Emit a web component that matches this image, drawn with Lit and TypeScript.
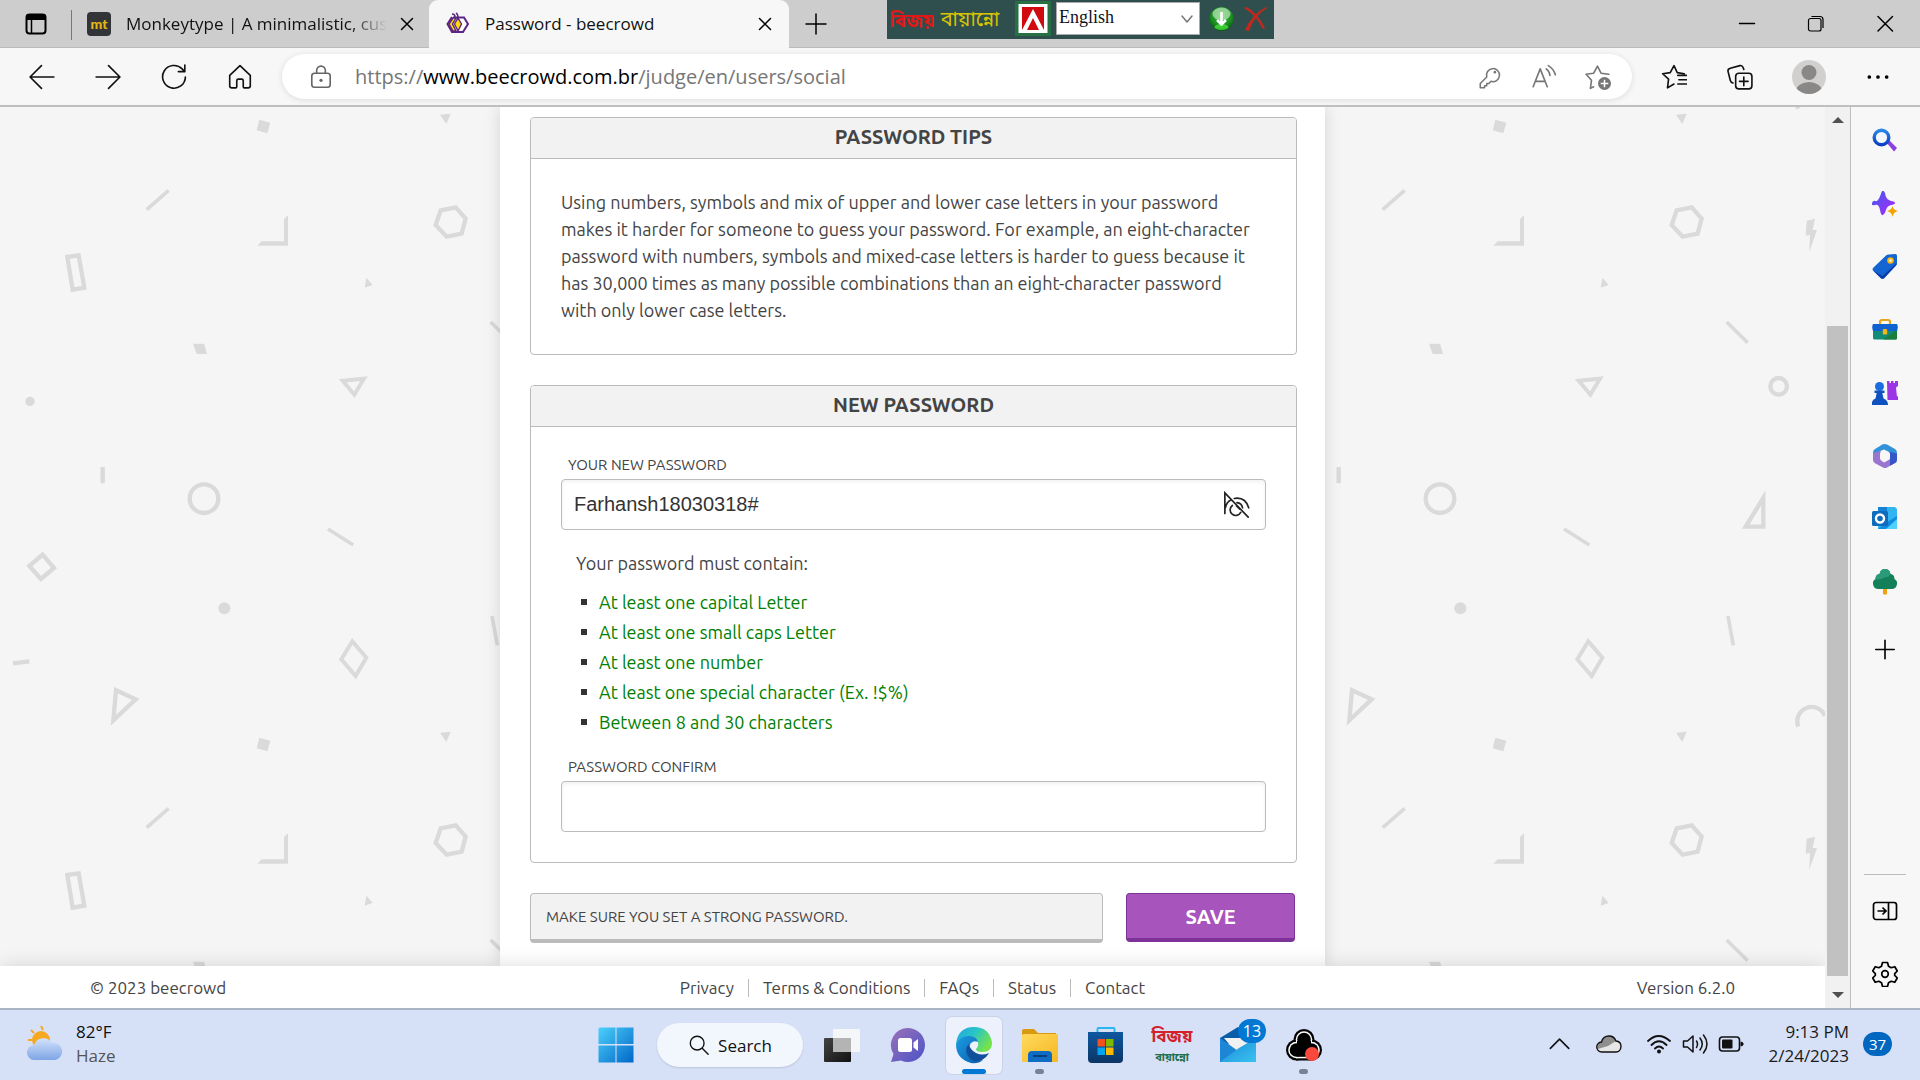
import { LitElement, html, css, svg } from "lit";
import { customElement } from "lit/decorators.js";

const shape = (paint: unknown, box: string, cls: string) =>
  html`<svg class=${cls} viewBox=${box} aria-hidden="true">${paint}</svg>`;
const line = (d: string, cls = "ico", box = "0 0 24 24") =>
  shape(svg`<path d=${d} fill="none" stroke="currentColor" stroke-width="1.5" stroke-linecap="round" stroke-linejoin="round"></path>`, box, cls);

/* ---------- tab strip ---------- */
@customElement("tab-strip")
class TabStrip extends LitElement {
  static styles = css`
    :host { display: block; font-family: "Segoe UI", "Open Sans", sans-serif; color: #111; }
    .strip { display: flex; height: 48px; background: #cdcdcd; box-shadow: inset 0 -1px 0 #bababa; position: relative; }
    button { border: 0; background: none; padding: 0; margin: 0; color: #000; display: flex; align-items: center; justify-content: center; flex: none; }
    .ico { width: 24px; height: 24px; display: block; flex: none; }
    .menu { width: 71px; }
    .rule { width: 1px; height: 30px; margin-top: 10px; background: #777; }
    .tab { display: flex; align-items: center; box-sizing: border-box; width: 357px; padding: 0 10px 0 15px; }
    .tab.active { width: 360px; background: #f7f7f7; border-radius: 9px 9px 0 0; padding: 0 12px 0 17px; }
    .name { flex: 1; font-size: 17px; line-height: 24px; white-space: nowrap; margin: 0 8px 0 15px; }
    .fade { -webkit-mask-image: linear-gradient(90deg, #000 86%, transparent); mask-image: linear-gradient(90deg, #000 86%, transparent); }
    .plus { width: 53px; }
    .win { margin-left: auto; display: flex; padding-right: 1px; }
    .win button { width: 69px; }
    .bar { position: absolute; left: 887px; top: 0; width: 387px; height: 39px; background: #2f4f4f; display: flex; align-items: center; box-sizing: border-box; padding: 0 6px 2px 4px; }
    .bijoy { width: 43px; height: 32px; }
    .bn { width: 64px; height: 30px; margin: 0 12px 0 5px; }
    .flag { width: 36px; height: 35px; margin-right: 5px; }
    select { width: 144px; height: 33px; border: 1px solid #aaa; background: #fff; font-family: "Liberation Serif", serif; font-size: 18px; padding: 0 0 3px 2px; margin: 0; appearance: none; color: #112; position: relative; }
    .pick { position: relative; display: flex; }
    .pick svg { position: absolute; right: 5px; top: 9px; width: 16px; height: 16px; color: #777; }
    .ball { width: 25px; height: 26px; margin: 0 9px 0 9px; }
    .kill { width: 25px; height: 26px; }
  `;
  render() {
    const cross = "M6.5 6.5l11 11M17.5 6.5l-11 11";
    return html`<div class="strip">
      <button class="menu" aria-label="Tab actions">${shape(svg`<rect x="2.5" y="2.5" width="19" height="19" rx="3" fill="none" stroke="#000" stroke-width="2"/><path d="M2 8V5a3 3 0 0 1 3-3h14a3 3 0 0 1 3 3v3z"/><path d="M7.5 8v13" stroke="#000" stroke-width="1.5"/>`, "0 0 24 24", "ico")}</button>
      <div class="rule"></div>
      <div class="tab">
        ${shape(svg`<rect width="24" height="24" rx="4" fill="#323437"/><text x="12" y="17" text-anchor="middle" font-family="Lato, sans-serif" font-weight="900" font-size="14" fill="#e2b714">mt</text>`, "0 0 24 24", "ico")}
        <span class="name fade">Monkeytype | A minimalistic, cus</span>
        <button aria-label="Close tab">${line(cross)}</button>
      </div>
      <div class="tab active">
        ${shape(svg`<path d="M6 5L1.500 12L6 20H17L22 12L18 5.500H7" fill="#fff" stroke="#5c2684" stroke-width="2"/><path d="M7 6L3 12l4 7h3l-3.500-7L10 6zM12 6l3.500 6-3.500 7-3.500-7z" fill="#fd0" stroke="#5c2684" stroke-width="1.400"/><path d="M9 5q0-3-3-3M12 5q0-3-2-4" fill="none" stroke="#5c2684" stroke-width="1.500"/>`, "0 0 24 24", "ico")}
        <span class="name">Password - beecrowd</span>
        <button aria-label="Close tab">${line(cross)}</button>
      </div>
      <button class="plus" aria-label="New tab">${line("M12 2v20M2 12h20")}</button>
      <div class="win">
        <button aria-label="Minimize">${line("M4.500 11.500h15")}</button>
        <button aria-label="Restore">${shape(svg`<rect x="4.500" y="6.500" width="12.500" height="12.500" rx="2" fill="none" stroke="#000" stroke-width="1.200"/><path d="M7.500 4.500H16a3 3 0 0 1 3 3V16" fill="none" stroke="#000" stroke-width="1.200"/>`, "0 0 24 24", "ico")}</button>
        <button aria-label="Close">${line("M5 4.500l14.500 14.500M19.500 4.500L5 19")}</button>
      </div>
      <div class="bar">
        ${shape(svg`<text x="21" y="24" text-anchor="middle" font-size="19" font-weight="700" font-family="'Noto Sans Bengali', sans-serif" fill="#e01818">বিজয়</text>`, "0 0 43 32", "bijoy")}
        ${shape(svg`<text x="31" y="22" text-anchor="middle" font-size="20" font-family="'Noto Sans Bengali', sans-serif" fill="#d8c400">বায়ান্নো</text>`, "0 0 64 30", "bn")}
        ${shape(svg`<rect width="36" height="35" fill="#277043"/><rect x="3.500" y="3" width="29" height="29" fill="#fff"/><rect x="7" y="6" width="22" height="23" fill="#d00a0e"/><path d="M7 29L18 8l11 21h-5l-6-12-6 12z" fill="#fff"/>`, "0 0 36 35", "flag")}
        <div class="pick"><select aria-label="Keyboard layout"><option>English</option></select>${line("M3 5l5 6 5-6", "", "0 0 16 16")}</div>
        ${shape(svg`<defs><radialGradient id="b" cx=".5" cy=".35" r=".7"><stop offset="0" stop-color="#2fbe2a"/><stop offset=".6" stop-color="#1c8f22"/><stop offset="1" stop-color="#064d0c"/></radialGradient></defs><circle cx="12.500" cy="13" r="12" fill="url(#b)"/><ellipse cx="12.500" cy="21" rx="7" ry="3" fill="#5f4" opacity=".6"/><ellipse cx="12.500" cy="8" rx="9" ry="6.500" fill="#fff" opacity=".5"/><path d="M12.500 6v12M8 14l4.500 4.500L17 14" fill="none" stroke="#fff" stroke-width="2.600"/>`, "0 0 25 26", "ball")}
        ${shape(svg`<path d="M1 2Q13 9 20 23l2-1Q16 9 4 1zM23 1Q9 8 2 24l4 1Q11 10 24 2z" fill="#c2281e"/>`, "0 0 25 26", "kill")}
      </div>
    </div>`;
  }
}

/* ---------- address row ---------- */
@customElement("address-row")
class AddressRow extends LitElement {
  static styles = css`
    :host { display: block; background: #f7f7f7; border-bottom: 2px solid #bfbfbf; }
    .row { display: flex; align-items: center; height: 57px; padding: 0 9px; }
    button { border: 0; background: none; padding: 0; color: #111; display: flex; align-items: center; justify-content: center; width: 66px; height: 45px; flex: none; }
    .ico { width: 26px; height: 26px; display: block; }
    .pill { flex: 1; height: 45px; border-radius: 23px; background: #fff; box-shadow: 0 1px 6px #0000001c; display: flex; align-items: center; margin: 0 9px; padding: 0 7px 0 25px; }
    .pill button { width: 54px; color: #767676; }
    .pill button.lock { width: 28px; color: #666; }
    .url { flex: 1; font-family: "Segoe UI", "Open Sans", sans-serif; font-size: 20px; line-height: 28px; margin-left: 20px; color: #767676; }
    .url b { font-weight: 400; color: #000; }
    .face { width: 34px; height: 34px; }
    .end { width: 72px; }
  `;
  render() {
    return html`<div class="row">
      <button aria-label="Back">${line("M23 12H1.500M11.500 1.500L1 12l10.500 10.500")}</button>
      <button aria-label="Forward">${line("M1 12h21.500M12.500 1.500L23 12 12.500 22.500")}</button>
      <button aria-label="Refresh">${line("M22.500 12A10.500 10.500 0 1 1 19.500 4.500L22 7M22 1v6h-6")}</button>
      <button aria-label="Home">${line("M2.500 10.500L12 1.500l9.500 9V20a2 2 0 0 1-2 2H16a1 1 0 0 1-1-1v-5.500a1.500 1.500 0 0 0-1.500-1.500h-3A1.500 1.500 0 0 0 9 15.500V21a1 1 0 0 1-1 1H4.500a2 2 0 0 1-2-2z")}</button>
      <div class="pill">
        <button class="lock" aria-label="Site information">${shape(svg`<rect x="3.500" y="8.500" width="17" height="13" rx="2.500" fill="none" stroke="currentColor" stroke-width="1.500"/><path d="M8 8.500V6a4 4 0 0 1 8 0v2.500" fill="none" stroke="currentColor" stroke-width="1.500"/><circle cx="12" cy="15" r="1.500" fill="currentColor"/>`, "0 0 24 24", "ico")}</button>
        <div class="url">https://<b>www.beecrowd.com.br</b>/judge/en/users/social</div>
        <button aria-label="Saved passwords">${shape(svg`<path d="M9 12a6 6 0 1 1 4 4l-2 2H9v2H7v2H3v-4z" fill="none" stroke="currentColor" stroke-width="1.400" stroke-linejoin="round"/><circle cx="16.500" cy="7.500" r="1.200" fill="currentColor"/>`, "0 0 24 24", "ico")}</button>
        <button aria-label="Read aloud">${line("M2 21L8.500 4.500 15 21M4 16h9M14 4.500q3 2 3.500 6M16 1.500q5 3 6.500 8.500")}</button>
        <button aria-label="Add to favorites">${shape(svg`<path d="M8 21l-3 1.500 1-7.500L1 9.500l7-1L11.500 2l3.300 6.500 7.200 1" fill="none" stroke="currentColor" stroke-width="1.500" stroke-linejoin="round" stroke-linecap="round"/><circle cx="18" cy="18" r="6" fill="currentColor"/><path d="M18 14.500v7M14.500 18h7" stroke="#fff" stroke-width="1.400"/>`, "0 0 24 24", "ico")}</button>
      </div>
      <button aria-label="Favorites">${line("M12 18.500L6 22l1-8L1.500 9l7-1L12 1.500 15 8l6.500 1M15.500 10.500h8M16.500 14.500h7M15.500 18.500h8")}</button>
      <button aria-label="Collections">${line("M5.500 17.500Q3.500 17 3 15L1 7q-.5-2.500 2-3l9-2.500q2-.5 3 2l.5 1.500M11 8.500h9a3 3 0 0 1 3 3v8.500a3 3 0 0 1-3 3h-9a3 3 0 0 1-3-3v-8.500a3 3 0 0 1 3-3M15.500 12v8M11.500 16h8")}</button>
      <button class="end" aria-label="Profile">${shape(svg`<clipPath id="c"><circle cx="17" cy="17" r="17"/></clipPath><g clip-path="url(#c)"><rect width="34" height="34" fill="#d2d0ce"/><circle cx="17" cy="12.500" r="7.500" fill="#8a8886"/><ellipse cx="17" cy="31" rx="13" ry="9" fill="#8a8886"/></g>`, "0 0 34 34", "face")}</button>
      <button aria-label="Settings and more">${shape(svg`<g fill="#000"><circle cx="4" cy="12" r="1.700"/><circle cx="12" cy="12" r="1.700"/><circle cx="20" cy="12" r="1.700"/></g>`, "0 0 24 24", "ico")}</button>
    </div>`;
  }
}

/* ---------- decorative page backdrop, one repeating tile ---------- */
const arc = svg`<path d="M1687 1880A43 43 0 1 1 1767 1848"/>`;
const backdrop = html`<svg class="backdrop" width="100%" height="100%" aria-hidden="true">
  <defs><pattern id="tile" width="1236" height="618" patternUnits="userSpaceOnUse">
    <g transform="translate(0 -7) scale(.33333)" fill="none" stroke="#dadada" stroke-width="13">
      <g fill="#dadada" stroke="none">
        <path d="M778 59l33 9-9 32-32-9z"/><path d="M1320 44l32-3-13 31z"/><path d="M864 346v91h-92l13-13h67v-67z"/>
        <path d="M1099 533l19 22-24 8z"/><path d="M579 731h33l9 31h-31z"/><circle cx="90" cy="904" r="14"/>
        <circle cx="673" cy="1525" r="18"/><path d="M1712 362l25-6-7 34h13l-23 65 2-50-13 2z"/>
      </g>
      <path d="M440 329l66-58M984 1287l76 48M1472 666l63 62M1476 1548l16 88" stroke-width="11"/>
      <path d="M1322 331l45-9 30 34-12 45-45 9-33-35z"/>
      <path d="M202 471l34-5 17 97-35 6z"/>
      <path d="M1028 842l64-6-29 48z" stroke-width="12"/>
      <path d="M308 1101v49M39 1690l49-6"/>
      <circle cx="612" cy="1196" r="43"/><circle cx="1628" cy="859" r="25"/>
      <path d="M128 1364l34 40-39 33-35-39z"/><path d="M1057 1624l42 49-32 55-43-50z" stroke-width="12"/>
      <path d="M348 1771l59 27-67 63z"/><path d="M1582 1194v86h-53z"/>
      ${arc}<g transform="translate(0 -1854)">${arc}</g>
    </g>
  </pattern></defs>
  <rect width="100%" height="100%" fill="url(#tile)"/>
</svg>`;

/* ---------- web page ---------- */
@customElement("password-page")
class PasswordPage extends LitElement {
  static styles = css`
    :host { display: flex; flex-direction: column; flex: 1; min-width: 0; position: relative; overflow: hidden; background: #f5f5f5; font-family: Ubuntu, "Noto Sans", sans-serif; color: #444; }
    .backdrop { position: absolute; inset: 0; }
    main { position: relative; flex: 1; width: 767px; margin: 0 auto; padding: 10px 28px 0 30px; background: #fff; box-shadow: 0 0 16px #00000022; }
    section { border: 1px solid #bbb; border-radius: 4px; margin-bottom: 30px; }
    h2 { margin: 0; height: 40px; line-height: 38px; border-bottom: 1px solid #bbb; background: #f2f2f2; border-radius: 3px 3px 0 0; text-align: center; font-size: 20px; font-weight: 700; color: #444; }
    .tips { margin: 0; padding: 30px; font-size: 18px; line-height: 27px; white-space: nowrap; }
    .fields { padding: 24px 30px 30px; }
    label { display: block; font-size: 15px; line-height: 28px; padding-left: 7px; }
    .box { position: relative; display: flex; }
    input { flex: 1; min-width: 0; height: 51px; box-sizing: border-box; border: 1px solid #bbb; border-radius: 4px; background: #fff; box-shadow: inset 0 2px 4px #0000000f; font-family: "Liberation Sans", Arial, sans-serif; font-size: 20px; color: #333; padding: 0 12px; margin: 0; }
    .peek { position: absolute; right: 14px; top: 12px; width: 30px; height: 28px; border: 0; padding: 0; background: none; }
    .peek svg { width: 30px; height: 28px; display: block; }
    .hint { margin: 19px 0 10px; padding-left: 15px; font-size: 18px; line-height: 28px; }
    ul { margin: 0 0 16px; padding-left: 20px; list-style: none; font-size: 18px; line-height: 30px; color: green; }
    li { display: flex; align-items: center; gap: 12px; }
    li::before { content: ""; width: 6px; height: 6px; background: #333; }
    .foot { display: flex; gap: 23px; padding-right: 2px; }
    .note { flex: 1; box-sizing: border-box; height: 50px; line-height: 46px; padding: 0 15px; border: 1px solid #bbb; border-bottom-width: 4px; border-radius: 4px; background: #f2f2f2; font-size: 15px; }
    .save { width: 169px; height: 49px; border: 1px solid #7e3197; border-bottom-width: 4px; border-radius: 4px; background: #a854bd; color: #fff; font-family: inherit; font-weight: 600; font-size: 20px; padding: 0; }
    footer { position: relative; display: grid; grid-template-columns: 1fr auto 1fr; align-items: center; box-sizing: border-box; height: 42px; padding: 2px 90px 0; background: #fff; box-shadow: 0 0 20px #00000024; font-size: 17px; line-height: 24px; }
    footer span:last-child { text-align: right; }
    nav { display: flex; }
    nav a { color: #444; text-decoration: none; padding: 0 14px; line-height: 18px; }
    nav a + a { border-left: 1px solid #bbb; }
  `;
  render() {
    return html`${backdrop}
      <main>
        <section>
          <h2>PASSWORD TIPS</h2>
          <p class="tips">Using numbers, symbols and mix of upper and lower case letters in your password<br>makes it harder for someone to guess your password. For example, an eight-character<br>password with numbers, symbols and mixed-case letters is harder to guess because it<br>has 30,000 times as many possible combinations than an eight-character password<br>with only lower case letters.</p>
        </section>
        <section>
          <h2>NEW PASSWORD</h2>
          <div class="fields">
            <label for="pw">YOUR NEW PASSWORD</label>
            <div class="box"><input id="pw" type="text" .value=${"Farhansh18030318#"}>
              <button class="peek" aria-label="Hide password">${shape(svg`<g fill="none" stroke="#222" stroke-width="1.800" stroke-linecap="round"><path d="M2 24V2l25 26M2.500 18Q4 12 8 10M12 8q12-2 15.500 10M10 15.500a6 6 0 1 0 9 7.500M15 12.500q5 .5 6 5.500M14.500 16l3.500 3.500"/></g>`, "0 0 30 30", "")}</button>
            </div>
            <p class="hint">Your password must contain:</p>
            <ul>
              <li>At least one capital Letter</li><li>At least one small caps Letter</li><li>At least one number</li><li>At least one special character (Ex. !$%)</li><li>Between 8 and 30 characters</li>
            </ul>
            <label for="pw2">PASSWORD CONFIRM</label>
            <div class="box"><input id="pw2" type="password"></div>
          </div>
        </section>
        <div class="foot"><div class="note">MAKE SURE YOU SET A STRONG PASSWORD.</div><button class="save">SAVE</button></div>
      </main>
      <footer><span>© 2023 beecrowd</span>
        <nav><a href="#">Privacy</a><a href="#">Terms &amp; Conditions</a><a href="#">FAQs</a><a href="#">Status</a><a href="#">Contact</a></nav>
        <span>Version 6.2.0</span></footer>`;
  }
}

/* ---------- browser side rail ---------- */
@customElement("side-rail")
class SideRail extends LitElement {
  static styles = css`
    :host { display: flex; flex: none; }
    .scroll { width: 25px; background: #f1f1f1; display: flex; flex-direction: column; align-items: center; border-right: 1px solid #bfbfbf; }
    .arrow { width: 12px; height: 6px; margin: 10px 0; }
    .room { flex: 193; }
    .thumb { flex: 650; width: 21px; background: #c1c1c1; }
    .low { flex: 6; }
    .rail { width: 69px; background: #f7f7f7; display: flex; flex-direction: column; align-items: center; padding: 2px 2px 0 0; box-sizing: border-box; }
    button { border: 0; background: none; width: 63px; height: 63px; padding: 0; display: flex; align-items: center; justify-content: center; color: #000; }
    .ico { width: 26px; height: 26px; }
    .plus { margin-top: 4px; }
    .gap { flex: 1; }
    hr { width: 42px; border: 0; border-top: 1px solid #bbb; margin: 0 0 4px; }
    button.cfg { margin-bottom: 3px; }
  `;
  render() {
    const art: [string, unknown][] = [
      ["Search", svg`<defs><linearGradient id="h" x2="0" y2="1"><stop stop-color="#2a86e8"/><stop offset="1" stop-color="#0b3fc4"/></linearGradient></defs><path d="M14.500 14.500l3-2L25 20l-3 3.500z" fill="#8a3fe0"/><circle cx="9.500" cy="9.500" r="7.300" fill="#f4f8ff" stroke="url(#h)" stroke-width="3.400"/>`],
      ["Discover", svg`<defs><linearGradient id="d" x2="1" y2="1"><stop stop-color="#3b5bf0"/><stop offset="1" stop-color="#b128f8"/></linearGradient></defs><path d="M11 0q2 0 2.500 4.500 1 4 5.500 5.500 4 .5 4 2t-4 2q-4 1-5 5t-3 5-3-5-5-5-3-2 3.500-2 5-6T11 0z" fill="url(#d)"/><path d="M20.500 15q.8 4 5.500 5-4.700 1-5.500 6-.8-5-5.500-6 4.700-1 5.500-5z" fill="#f2a500"/>`],
      ["Shopping", svg`<path d="M1 14L14 1.500q1-.8 3-1l6.500-.5Q25 0 25 2v7q0 1.500-1.500 3L12 24.500q-2 1-3.500-.5L1 16.500q-1-1 0-2.500z" fill="#1464d2"/><path d="M1 16.500L9 24q1.500 1 3 0l11.500-12q1.500-1.500 1.500-3L10.500 22z" fill="#0a3ba8"/><circle cx="18.500" cy="6.500" r="2.300" fill="#fff" stroke="#f7b719" stroke-width="2"/>`],
      ["Tools", svg`<path d="M8 8V5q0-2 2-2h6q2 0 2 2v3" fill="none" stroke="#e9a41c" stroke-width="2.200"/><rect x="1" y="12" width="24" height="10.500" rx="1.500" fill="#138b76"/><path d="M11 22.500h12.500q1.500 0 1.500-1.500V13z" fill="#1b7e3c"/><path d="M1 7h24q1.500 3 0 7H1q-1.500-4 0-7z" fill="#0f62cf"/><rect x="10.800" y="12" width="4.400" height="5.500" rx="1" fill="#f5b51b"/>`],
      ["Games", svg`<path d="M15 1h2.500v2H19V1h2.500v2H23V1h3v5l-2 1.500.8 8 1.700 2V20H15.500z" fill="#9b35e6"/><circle cx="7.500" cy="6.500" r="4.500" fill="#1a6ce0"/><path d="M2.500 10.500h10v2.500h-2.200l1.200 5.500q4.500 1.500 4.500 6.500H-.5q0-5 4-6.500L4.700 13H2.500z" fill="#0f52bf"/>`],
      ["Microsoft 365", svg`<path d="M8 3q3-3 7-1.500l8 4.500q2 1.200 2 4v7l-8-4.500V9l-5-2.500Q5 9 4 13v4.500Q1 16 1 13V9.500Q1 7 3 6z" fill="#3292d8"/><path d="M1 10v7q0 2 2 3.200l8 4.300q2 1 4 0l8-4.500q2-1.200 2-3.500v-6L16.500 17 12 19.500 8.500 17V8z" fill="#9b76d1"/><path d="M25 10.500v6q0 2.300-2 3.500l-5 2.800V9z" fill="#3456c7"/><path d="M13 7.500l5 2.700v5.600l-5 2.700-5-2.700v-5.600z" fill="#f7f7f7"/>`],
      ["Outlook", svg`<path d="M6 1h17l2 2v20H6z" fill="#31b4f2"/><path d="M6 1h9v8H6z" fill="#1582d8"/><path d="M16 15.500L25 10v13H6z" fill="#0f8be0"/><path d="M25 13v10H14z" fill="#50d0fa"/><rect y="5" width="16" height="15" rx="1.500" fill="#0f6cbd"/><circle cx="8" cy="12.500" r="4" fill="none" stroke="#fff" stroke-width="2.400"/>`],
      ["Tree", svg`<path d="M11 18h4v7q-2 1.500-4 0z" fill="#f2a114"/><path d="M7.500 5q1-5 5.500-5t5.500 5q4 .5 4 5 3 1.500 2.500 5-.5 5-5.500 5h-13q-5 0-5.500-5-.5-3.500 2.500-5 0-4.500 4-5z" fill="#14805a"/><path d="M7.500 5q1-5 5.500-5t5.500 5q-2 4-6 3.500-5 3-9 1.500 0-4.500 4-5z" fill="#2b9a7a"/>`],
    ];
    return html`<div class="scroll">
        ${shape(svg`<path d="M0 6l6-6 6 6z" fill="#505050"/>`, "0 0 12 6", "arrow")}
        <div class="room"></div><div class="thumb"></div><div class="low"></div>
        ${shape(svg`<path d="M0 0l6 6 6-6z" fill="#505050"/>`, "0 0 12 6", "arrow")}
      </div>
      <div class="rail">
        ${art.map(([name, a]) => html`<button aria-label=${name}>${shape(a, "0 0 26 26", "ico")}</button>`)}
        <button class="plus" aria-label="Customize">${line("M12 4v17M3.500 12.500h17")}</button>
        <div class="gap"></div><hr>
        <button aria-label="Hide sidebar">${shape(svg`<g fill="none" stroke="#000" stroke-width="1.700"><rect x="1.500" y="4.500" width="23" height="17" rx="2.500"/><path d="M16.500 5v16M5.500 13h8M10.500 9.500L14 13l-3.500 3.500"/></g>`, "0 0 26 26", "ico")}</button>
        <button class="cfg" aria-label="Sidebar settings">${shape(svg`<g fill="none" stroke="#000" stroke-width="1.700" stroke-linejoin="round"><circle cx="13" cy="13" r="3.300"/><path d="M10.500 1.500h5l1 3.700 2.700 1.500 3.600-1 2.500 4.300-2.600 2.600v1.800l2.600 2.600-2.500 4.300-3.600-1-2.700 1.500-1 3.700h-5l-1-3.700-2.700-1.500-3.600 1L.7 17l2.600-2.600v-1.800L.7 10l2.500-4.300 3.600 1 2.700-1.500z"/></g>`, "0 0 26 26", "ico")}</button>
      </div>`;
  }
}

/* ---------- desktop taskbar ---------- */
@customElement("task-bar")
class TaskBar extends LitElement {
  static styles = css`
    :host { display: block; border-top: 2px solid #abb4c4; background: #d6e1f8; font-family: "Segoe UI", "Open Sans", sans-serif; color: #1a1a1a; }
    .row { display: grid; grid-template-columns: 1fr auto 1fr; height: 70px; align-items: center; }
    button { border: 0; background: none; padding: 0; margin: 0; color: #111; font-family: inherit; display: flex; align-items: center; justify-content: center; }
    .weather { display: flex; align-items: center; gap: 12px; padding: 0 0 3px 26px; font-size: 17px; line-height: 24px; text-align: left; justify-self: start; }
    .weather .grey { color: #555; }
    .sky { width: 38px; height: 40px; }
    .apps { display: flex; align-items: center; height: 70px; }
    .app { width: 56px; height: 57px; margin: 0 5px; border-radius: 6px; position: relative; }
    .app.on { background: #ecf1fc; box-shadow: 0 0 0 1px #c9d4ea; }
    .ico { width: 36px; height: 36px; display: block; overflow: visible; }
    .dot { position: absolute; bottom: 0; left: 23px; width: 9px; height: 5px; border-radius: 3px; background: #788094; }
    .on .dot { left: 16px; width: 24px; background: #0078d4; }
    .search { width: 146px; height: 44px; border-radius: 22px; background: #f2f6fd; box-shadow: 0 1px 2px #0002; font-size: 17px; gap: 8px; margin: 0 6px 0 8px; }
    .search svg { width: 22px; height: 22px; }
    .tray { display: flex; align-items: center; justify-self: end; padding: 0 28px 2px 0; }
    .tray .t { width: 26px; height: 26px; margin-right: 10px; }
    .tray .wide { margin-right: 14px; }
    .clock { font-size: 17px; line-height: 24px; text-align: right; margin: 0 14px 0 14px; }
    .count { width: 29px; height: 24px; border-radius: 12px; background: #0067c0; color: #fff; font-size: 15px; line-height: 24px; text-align: center; }
    .mail { position: absolute; left: 28px; top: 2px; width: 28px; height: 24px; border-radius: 12px; background: #0078d4; color: #fff; font-size: 16px; line-height: 24px; text-align: center; }
  `;
  app(name: string, art: unknown, state = "") {
    return html`<button class="app ${state}" aria-label=${name}>${shape(art, "0 0 36 36", "ico")}${name === "Mail" ? html`<span class="mail">13</span>` : ""}${state ? html`<span class="dot"></span>` : ""}</button>`;
  }
  render() {
    return html`<div class="row">
      <button class="weather">
        ${shape(svg`<defs><linearGradient id="w" x2="0" y2="1"><stop stop-color="#d3e2fa"/><stop offset="1" stop-color="#7ea5e6"/></linearGradient></defs><path d="M15 2l2 4M5 6l3 3M2 16h4" stroke="#f6a821" stroke-width="2"/><circle cx="15" cy="16" r="9" fill="#f7a823"/><path d="M9 36a7.500 7.500 0 0 1-1-15 10 10 0 0 1 18-2 8.500 8.500 0 1 1 3 17z" fill="url(#w)"/>`, "0 0 38 40", "sky")}
        <span>82°F<br><span class="grey">Haze</span></span>
      </button>
      <div class="apps">
        ${this.app("Start", svg`<defs><linearGradient id="s" x2="1" y2="1"><stop stop-color="#4dd0fb"/><stop offset="1" stop-color="#0067c7"/></linearGradient></defs><path d="M1.500.5H17.500V17H.500V1.500zM18.500.5H35.500V17H18.500zM.5 18.500H17.500V35.500H.500zM18.500 18.500H35.500V35.500H18.500z" fill="url(#s)"/>`)}
        <button class="search">${line("M10 2.500a7.500 7.500 0 1 0 0 15a7.500 7.500 0 1 0 0-15M15.500 15.500l6.500 6.500")}Search</button>
        ${this.app("Task view", svg`<defs><linearGradient id="k" x2="1" y2="1"><stop stop-color="#444"/><stop offset="1" stop-color="#111"/></linearGradient></defs><rect x="0" y="11" width="27" height="24" rx="1" fill="url(#k)"/><rect x="9" y="2" width="27" height="23" rx="1" fill="#f7f7f7" opacity=".95"/><path d="M9 11h18v14H10q-1 0-1-1z" fill="#b4b4b4"/>`)}
        ${this.app("Chat", svg`<defs><linearGradient id="t" x2="1" y2="1"><stop stop-color="#9a72b8"/><stop offset="1" stop-color="#4b53c8"/></linearGradient></defs><path d="M18 1a17 17 0 1 1-7 32.500L1 35l2.500-8A17 17 0 0 1 18 1z" fill="url(#t)"/><rect x="8" y="11" width="14" height="14" rx="2.500" fill="#fff"/><path d="M23.500 15.500l4.500-3.500v12l-4.500-3.500z" fill="#fff"/>`)}
        ${this.app("Edge", svg`<defs><linearGradient id="e1" x2="1" y2=".5"><stop stop-color="#25a4e0"/><stop offset=".5" stop-color="#28c4c9"/><stop offset="1" stop-color="#74e34b"/></linearGradient><linearGradient id="e2" x2="1" y2="1"><stop stop-color="#1b9de2"/><stop offset="1" stop-color="#0b5cad"/></linearGradient></defs><path d="M0 17Q2 0 18 0q15 0 18 15 .5 10-10 10-6 0-6-3 3-3 2-7-2-5-8-5Q5 10 0 17z" fill="url(#e1)"/><path d="M0 17Q5 8 14 9q7 1 8 6-4-2-7 1-4 5 0 12 5 7 12 5-5 4-12 3Q0 32 0 17z" fill="url(#e2)"/><path d="M13 17q-5 5-1 12 5 8 14 4 5-3 7-7-7 3-13 0-6-3-7-9z" fill="#0f4f9b"/>`, "on")}
        ${this.app("File Explorer", svg`<defs><linearGradient id="f" x2="1" y2="1"><stop stop-color="#ffd95c"/><stop offset="1" stop-color="#f5b823"/></linearGradient></defs><path d="M0 4q0-2 2-2h10l4 4h18v6H0z" fill="#d99a0f"/><rect y="7" width="36" height="28" rx="1.500" fill="url(#f)"/><path d="M6 35v-7q0-4 4-4h16q4 0 4 4v7z" fill="#0f6cc4"/><path d="M11 29h14" stroke="#0a3f7d" stroke-width="2"/>`, "dotted")}
        ${this.app("Store", svg`<defs><linearGradient id="m" x2="0" y2="1"><stop stop-color="#0e58a0"/><stop offset="1" stop-color="#0c3565"/></linearGradient></defs><path d="M9.500 6V2q0-1 1-1h15q1 0 1 1v4" fill="none" stroke="#29b6f0" stroke-width="2"/><path d="M0 5h35v27q0 4-4 4H4q-4 0-4-4z" fill="url(#m)"/><path d="M9.500 12h7.500v7.500H9.500z" fill="#f25022"/><path d="M18 12h7.500v7.500H18z" fill="#7fba00"/><path d="M9.500 20.500h7.500V28H9.500z" fill="#00a4ef"/><path d="M18 20.500h7.500V28H18z" fill="#ffb900"/>`)}
        ${this.app("Bijoy", svg`<text x="18" y="15" text-anchor="middle" font-size="17" font-weight="700" font-family="'Noto Sans Bengali', sans-serif" fill="#d3202a">বিজয়</text><text x="18" y="34" text-anchor="middle" font-size="11" font-weight="700" font-family="'Noto Sans Bengali', sans-serif" fill="#23704c">বায়ান্নো</text>`)}
        ${this.app("Mail", svg`<defs><linearGradient id="l" x2="1" y2="1"><stop stop-color="#1c86d8"/><stop offset="1" stop-color="#38c3ef"/></linearGradient></defs><path d="M0 11L18 0l18 11v6H0z" fill="#0a5da8"/><path d="M4 11h28v10L18 28z" fill="#f1f1f1"/><path d="M0 11l18 13-17 11H0z" fill="#1d86d6"/><path d="M36 11v24H0l19-14z" fill="url(#l)"/>`)}
        ${this.app("Recorder", svg`<circle cx="18" cy="12.500" r="10.500"/><circle cx="10.500" cy="23" r="10.500"/><circle cx="25.500" cy="23" r="10.500"/><rect x="10" y="22" width="16" height="11.500"/><g fill="#fff"><circle cx="18" cy="12.500" r="8.300"/><circle cx="10.500" cy="23" r="8.300"/><circle cx="25.500" cy="23" r="8.300"/><rect x="10" y="13" width="16" height="18.300"/></g><circle cx="18" cy="12.500" r="6.800"/><circle cx="10.500" cy="23" r="6.800"/><circle cx="25.500" cy="23" r="6.800"/><rect x="11" y="14" width="14" height="15.800"/><circle cx="26" cy="27" r="7" fill="#f9483c"/>`, "dotted")}
      </div>
      <div class="tray">
        <button class="wide" aria-label="Hidden icons">${line("M4 16l8.500-8.500L21 16", "t")}</button><button class="wide" aria-label="OneDrive">${shape(svg`<path d="M6 21a5 5 0 0 1-.500-10Q7 5 13 5q5 0 7 5 5 .5 5 5.500-.5 5.500-5 5.500z" fill="#e6e6e6"/><path d="M1.500 18Q0 12 5.500 11 7 5 13 5q5 0 7 5l-8 5z" fill="#8e8e8e"/><path d="M6 21a5 5 0 0 1-.500-10Q7 5 13 5q5 0 7 5 5 .5 5 5.500-.5 5.500-5 5.500z" fill="none" stroke="#111" stroke-width="1.400"/>`, "0 0 26 26", "t")}</button>
        <button aria-label="Network">${shape(svg`<g fill="none" stroke="#111" stroke-width="1.800" stroke-linecap="round"><path d="M2 10q10.500-10 22 0M5.500 14q7.500-7.500 15 0M9 17.500q4-4 8 0"/></g><circle cx="13" cy="20.500" r="2" fill="#111"/>`, "0 0 26 26", "t")}</button><button aria-label="Volume">${shape(svg`<g fill="none" stroke="#111" stroke-width="1.500" stroke-linecap="round" stroke-linejoin="round"><path d="M1.500 10h4L11 5v16l-5.500-5h-4zM14.500 10q2 3 0 6.500M18 7q4.500 6 0 12M21.500 4q7 9 0 18"/></g>`, "0 0 26 26", "t")}</button><button aria-label="Battery">${shape(svg`<rect x="1.500" y="6" width="20" height="14" rx="3" fill="none" stroke="#111" stroke-width="1.600"/><rect x="4" y="8.500" width="10.500" height="9" rx="1" fill="#111"/><path d="M23 11v4l2-1v-2z" fill="#111" stroke="#111"/>`, "0 0 26 26", "t")}</button>
        <div class="clock">9:13 PM<br>2/24/2023</div>
        <div class="count">37</div>
      </div>
    </div>`;
  }
}

@customElement("app-root")
class AppRoot extends LitElement {
  static styles = css`
    :host { display: flex; flex-direction: column; height: 100vh; overflow: hidden; }
    .body { flex: 1; min-height: 0; display: flex; }
  `;
  render() {
    return html`<tab-strip></tab-strip><address-row></address-row>
      <div class="body"><password-page></password-page><side-rail></side-rail></div>
      <task-bar></task-bar>`;
  }
}
